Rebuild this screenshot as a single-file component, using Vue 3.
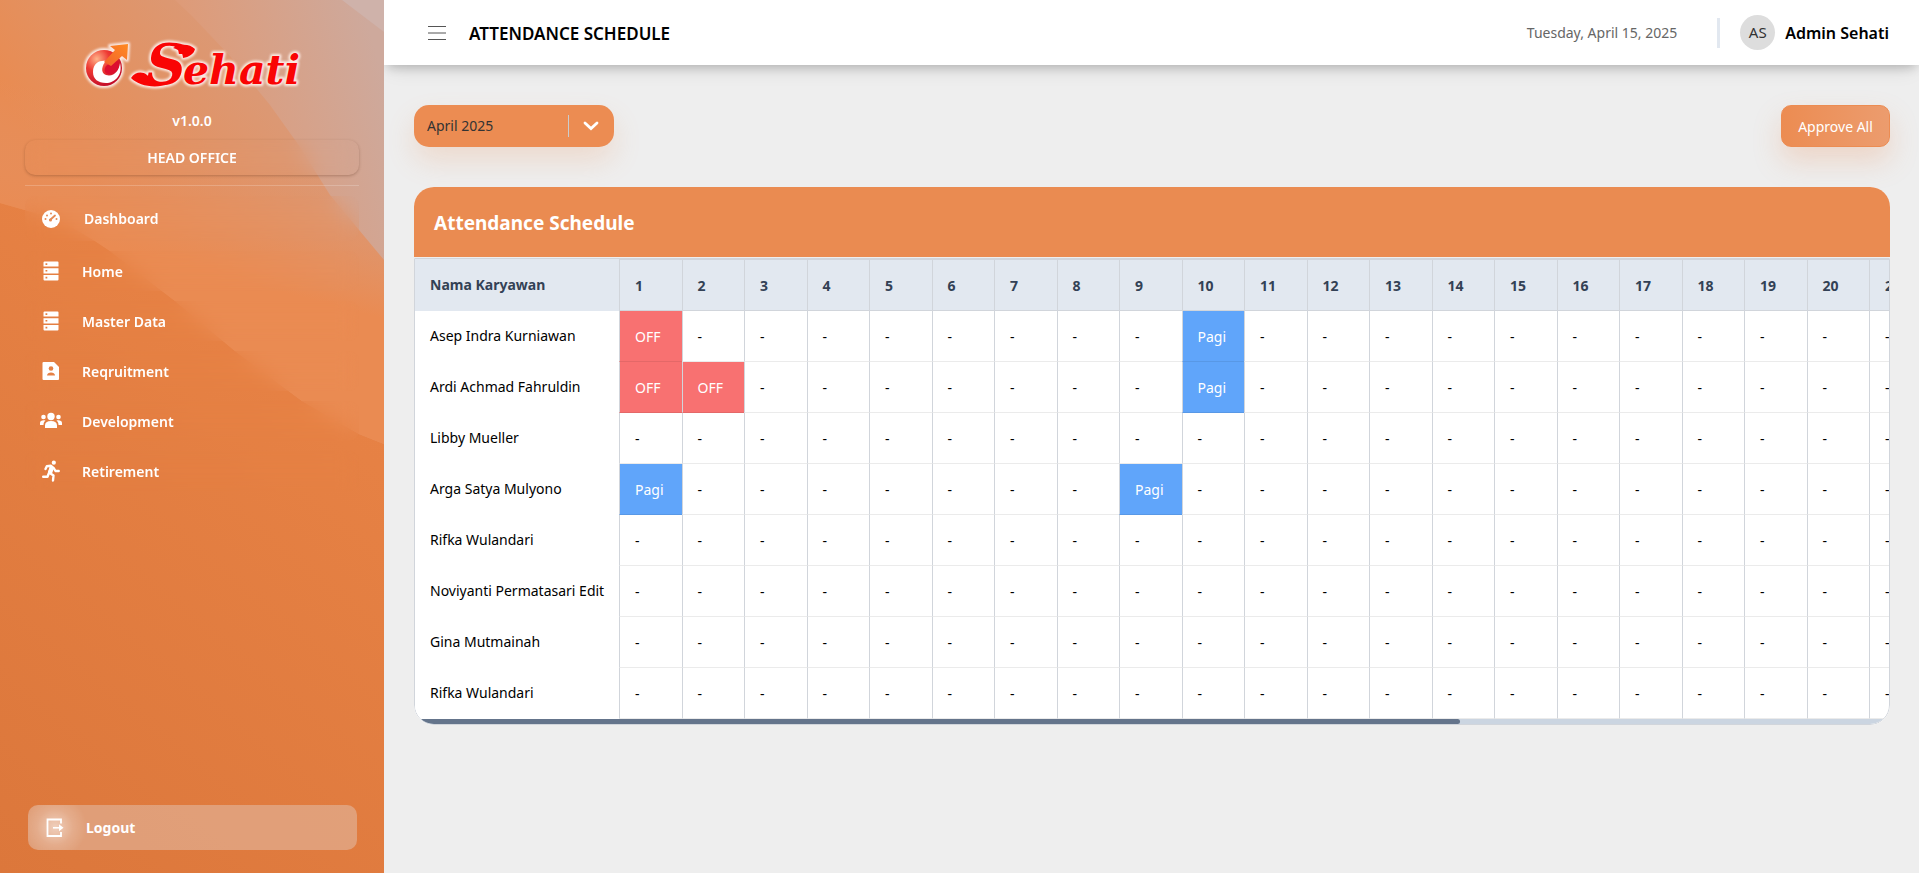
<script setup>
import { ref, computed, onMounted } from 'vue'

const menu = [
  { label: 'Dashboard', icon: 'gauge', active: true },
  { label: 'Home', icon: 'server' },
  { label: 'Master Data', icon: 'server' },
  { label: 'Reqruitment', icon: 'profile' },
  { label: 'Development', icon: 'people' },
  { label: 'Retirement', icon: 'runner' },
]

const month = ref('April 2025')
const months = ['March 2025', 'April 2025', 'May 2025']
const days = Array.from({ length: 30 }, (_, i) => i + 1)

const employees = [
  { name: 'Asep Indra Kurniawan', shifts: { 1: 'OFF', 10: 'Pagi' } },
  { name: 'Ardi Achmad Fahruldin', shifts: { 1: 'OFF', 2: 'OFF', 10: 'Pagi' } },
  { name: 'Libby Mueller', shifts: {} },
  { name: 'Arga Satya Mulyono', shifts: { 1: 'Pagi', 9: 'Pagi' } },
  { name: 'Rifka Wulandari', shifts: {} },
  { name: 'Noviyanti Permatasari Edit', shifts: {} },
  { name: 'Gina Mutmainah', shifts: {} },
  { name: 'Rifka Wulandari', shifts: {} },
]

const shiftClass = (shift) => ({ off: shift === 'OFF', pagi: shift === 'Pagi' })

// The scrollbar under the table follows the scroll position of the table area.
const scroller = ref(null)
const view = ref({ left: 0, shown: 1, total: 1 })
function measure() {
  const el = scroller.value
  view.value = { left: el.scrollLeft, shown: el.clientWidth, total: el.scrollWidth }
}
const thumb = computed(() => ({
  width: (view.value.shown / view.value.total) * 100 + '%',
  marginLeft: (view.value.left / view.value.total) * 100 + '%',
}))
onMounted(() => {
  measure()
  window.addEventListener('resize', measure)
})
</script>

<template>
  <div class="layout">
    <aside class="sidebar">
      <svg class="backdrop" viewBox="0 0 384 873" preserveAspectRatio="none" aria-hidden="true">
        <defs>
          <linearGradient id="base" gradientUnits="userSpaceOnUse" x1="0" y1="873" x2="384" y2="400">
            <stop offset="0" stop-color="#dc773b" />
            <stop offset="1" stop-color="#e78245" />
          </linearGradient>
          <linearGradient id="mid" gradientUnits="userSpaceOnUse" x1="110" y1="240" x2="310" y2="90">
            <stop offset="0" stop-color="#e98b51" />
            <stop offset="1" stop-color="#d99b7b" />
          </linearGradient>
          <linearGradient id="light" gradientUnits="userSpaceOnUse" x1="190" y1="80" x2="370" y2="30">
            <stop offset="0" stop-color="#df9a76" />
            <stop offset="1" stop-color="#cea99c" />
          </linearGradient>
          <linearGradient id="right" gradientUnits="userSpaceOnUse" x1="384" y1="180" x2="350" y2="310">
            <stop offset="0" stop-color="#e1946b" stop-opacity="0" />
            <stop offset="1" stop-color="#ea8b52" />
          </linearGradient>
        </defs>
        <rect width="384" height="873" fill="url(#base)" />
        <path d="M0 0H384V444L359 434L302 401L235 351L175 301L110 251L95 241L60 220L0 203Z" fill="url(#mid)" />
        <path d="M0 0H384V444L359 434L302 401L235 351L175 301L110 251L95 241L60 220L0 203Z" fill="url(#right)" />
        <path d="M175 0H384V260L330 195L300 147L270 105L230 56L192 16Z" fill="url(#light)" />
        <path d="M342 0H384V32Z" fill="#cfb2aa" />
      </svg>

      <svg class="logo" viewBox="0 0 240 70" role="img" aria-label="Sehati">
        <defs>
          <radialGradient id="ball" cx=".3" cy=".25" r=".85">
            <stop offset="0" stop-color="#ffb48a" />
            <stop offset=".4" stop-color="#ee3a33" />
            <stop offset="1" stop-color="#bd0626" />
          </radialGradient>
          <linearGradient id="arrow" x1="0" y1="1" x2="1" y2="0">
            <stop offset="0" stop-color="#f2622c" />
            <stop offset="1" stop-color="#ff8a22" />
          </linearGradient>
          <filter id="soft" x="-10%" y="-10%" width="120%" height="120%">
            <feGaussianBlur stdDeviation="1" />
          </filter>
        </defs>
        <g fill="none" stroke="#fbe9e2" stroke-width="4" stroke-linejoin="round" filter="url(#soft)">
          <circle cx="27" cy="38" r="18" />
          <path d="M33 16L51 14L50 30L45 26L34 36L27 32L38 20Z" />
        </g>
        <circle cx="27" cy="38" r="18" fill="url(#ball)" />
        <path d="M16 42C16 32 24 30 29 31C25 35 23 43 29 45C37 47 42 41 43 33C46 45 38 53 29 53C21 53 16 49 16 42Z" fill="#fff" />
        <path d="M29 36L38 30C44 30 43 40 37 43C31 46 25 43 29 36Z" fill="#dc0f2f" />
        <path d="M33 16L51 14L50 30L45 26L34 36L27 32L38 20Z" fill="url(#arrow)" />
        <g class="wordmark wordmark-glow" filter="url(#soft)">
          <path d="M54 48C58 42 65 41 70 45C76 51 82 54 92 54C78 59 62 56 54 48Z" />
          <path d="M96 18C104 13 113 14 118 19C117 24 112 27 106 28C106 23 103 20 96 18Z" />
          <text x="69" y="54" font-size="56">S</text>
          <text x="106" y="54" font-size="41">ehati</text>
        </g>
        <g class="wordmark">
          <path d="M54 48C58 42 65 41 70 45C76 51 82 54 92 54C78 59 62 56 54 48Z" />
          <path d="M96 18C104 13 113 14 118 19C117 24 112 27 106 28C106 23 103 20 96 18Z" />
          <text x="69" y="54" font-size="56">S</text>
          <text x="106" y="54" font-size="41">ehati</text>
        </g>
      </svg>
      <p class="version">v1.0.0</p>
      <div class="office">HEAD OFFICE</div>
      <hr class="rule" />

      <nav class="menu">
        <a v-for="item in menu" :key="item.label" href="#" class="menu-item" :class="{ active: item.active }">
          <svg v-if="item.icon === 'gauge'" class="icon" viewBox="0 0 22 22">
            <circle cx="11" cy="11" r="9" fill="#fff" />
            <path d="M10 12L15 7.500" stroke="#e58a54" stroke-width="1.800" stroke-linecap="round" />
            <g fill="#e58a54"><circle cx="10.500" cy="12" r="1.500" /><circle cx="5.500" cy="11" r="1" /><circle cx="7" cy="7.500" r="1" /><circle cx="11" cy="5.500" r="1" /><circle cx="16.500" cy="11" r="1" /></g>
          </svg>
          <svg v-else-if="item.icon === 'server'" class="icon" viewBox="0 0 22 22">
            <path fill="#fff" fill-rule="evenodd" d="M4.500 1.500h13a1 1 0 0 1 1 1v4h-15v-4a1 1 0 0 1 1-1zM5.500 3.200v1.800h1.800V3.200zM3.500 8.200h15v5.200h-15zM5.500 10v1.600h1.800V10zM3.500 15h15v4.500a1 1 0 0 1-1 1h-13a1 1 0 0 1-1-1zM5.500 16.800v1.800h1.800v-1.800z" />
          </svg>
          <svg v-else-if="item.icon === 'profile'" class="icon" viewBox="0 0 22 22">
            <path fill="#fff" d="M3.500 2h10.500l5 5v12a1 1 0 0 1-1 1h-14.500a1 1 0 0 1-1-1v-16a1 1 0 0 1 1-1z" />
            <circle cx="11" cy="8.500" r="2.300" fill="#e58146" />
            <path fill="#e58146" d="M7 15.500c0-4 8-4 8 0z" />
          </svg>
          <svg v-else-if="item.icon === 'people'" class="icon" viewBox="0 0 22 22">
            <g fill="#fff">
              <circle cx="11" cy="6.500" r="3.700" /><circle cx="3.500" cy="7" r="2.300" /><circle cx="18.500" cy="7" r="2.300" />
              <path d="M5 18v-2.500c0-3 2-4.500 6-4.500s6 1.500 6 4.500V18zM0 15v-2c0-2 2-3 5.500-2.500C4 12 3.500 13 3.500 15zM22 15v-2c0-2-2-3-5.500-2.500C18 12 18.500 13 18.500 15z" />
            </g>
          </svg>
          <svg v-else class="icon" viewBox="0 0 22 22">
            <circle cx="13.800" cy="2.700" r="2.100" fill="#fff" />
            <path fill="none" stroke="#fff" stroke-linecap="round" stroke-linejoin="round" stroke-width="2.400" d="M5.500 9L6.800 6.300L11 5.800L14 8.500L15.500 11H18.700M11.500 6.500L9 12.500L13.500 15.500L13 20.500M8.500 14L7.500 16.800H3.200" />
            <path fill="#fff" d="M10 5.500L14 8L12 13.500L8 12.500Z" />
          </svg>
          <span>{{ item.label }}</span>
        </a>
      </nav>

      <button class="logout" type="button">
        <svg class="logout-icon" viewBox="0 0 22 22">
          <path fill="none" stroke="#fff" stroke-width="1.800" d="M17 6.500V2.500H3.500V19H17V15" />
          <path fill="none" stroke="#fff" stroke-width="1.600" d="M9 10.800H17" />
          <path fill="#fff" d="M15 7.300L19.500 10.800L15 14.300Z" />
        </svg>
        <span>Logout</span>
      </button>
    </aside>

    <div class="page">
      <header class="topbar">
        <button class="burger" type="button" aria-label="Toggle menu">
          <svg viewBox="0 0 18 16"><path d="M0 1.500H18M0 8H18M0 14.500H18" stroke="#555" stroke-width="1" /></svg>
        </button>
        <h1>ATTENDANCE SCHEDULE</h1>
        <span class="date">Tuesday, April 15, 2025</span>
        <span class="divider"></span>
        <span class="avatar">AS</span>
        <strong class="user">Admin Sehati</strong>
      </header>

      <main class="content">
        <div class="toolbar">
          <div class="month">
            <select v-model="month" aria-label="Month">
              <option v-for="m in months" :key="m">{{ m }}</option>
            </select>
            <span class="month-mark">
              <svg viewBox="0 0 16 10"><path d="M2 2L8 7.500L14 2" fill="none" stroke="#fff" stroke-width="2.800" stroke-linecap="round" /></svg>
            </span>
          </div>
          <button class="approve" type="button">Approve All</button>
        </div>

        <section class="card">
          <h2>Attendance Schedule</h2>
          <div class="frame">
            <div ref="scroller" class="scroller" @scroll="measure">
              <table>
                <colgroup><col class="name-col" /><col v-for="d in days" :key="d" /></colgroup>
                <thead>
                  <tr>
                    <th class="name" scope="col">Nama Karyawan</th>
                    <th v-for="d in days" :key="d" scope="col">{{ d }}</th>
                  </tr>
                </thead>
                <tbody>
                  <tr v-for="(e, i) in employees" :key="i">
                    <td class="name">{{ e.name }}</td>
                    <td v-for="d in days" :key="d" :class="shiftClass(e.shifts[d])">{{ e.shifts[d] || '-' }}</td>
                  </tr>
                </tbody>
              </table>
            </div>
            <div class="track"><div class="thumb" :style="thumb"></div></div>
          </div>
        </section>
      </main>
    </div>
  </div>
</template>

<style>
body {
  background: #eee;
}
</style>

<style scoped>
.layout {
  display: flex;
  min-height: 100vh;
  font-family: "Noto Sans", "Open Sans", sans-serif;
  font-size: 14px;
  color: #000;
}
button,
select {
  font: inherit;
  border: 0;
  cursor: pointer;
}
.sidebar {
  position: relative;
  flex: 0 0 384px;
  box-sizing: border-box;
  display: flex;
  flex-direction: column;
  padding: 30px 25px 23px;
  color: #fff;
}
.backdrop {
  position: absolute;
  inset: 0;
  width: 100%;
  height: 100%;
}
.logo {
  position: relative;
  width: 240px;
  height: 70px;
  margin-left: 52px;
  overflow: visible;
}
.wordmark {
  font-family: "DejaVu Serif", serif;
  font-weight: bold;
  font-style: italic;
  fill: #f90404;
}
.wordmark-glow {
  fill: #fbe9e2;
  stroke: #fbe9e2;
  stroke-width: 4px;
  stroke-linejoin: round;
}
.version {
  position: relative;
  margin: 10px 0 9px;
  text-align: center;
  font-weight: 600;
  line-height: 21px;
}
.office {
  position: relative;
  text-align: center;
  font-weight: 600;
  line-height: 35px;
  border-radius: 10px;
  box-shadow: 0 1px 3px rgba(80, 40, 20, 0.3);
  backdrop-filter: blur(10px);
}
.rule {
  position: relative;
  width: 100%;
  height: 1px;
  margin: 10px 0;
  border: 0;
  background: rgba(255, 255, 255, 0.2);
}
.menu {
  display: flex;
  flex-direction: column;
  gap: 10px;
}
.menu-item {
  position: relative;
  display: flex;
  align-items: center;
  gap: 20px;
  height: 40px;
  padding-left: 15px;
  border-radius: 10px;
  color: #fff;
  font-weight: 600;
  text-decoration: none;
  backdrop-filter: blur(10px);
}
.menu-item.active {
  height: 45px;
  gap: 22px;
}
.icon {
  width: 22px;
  height: 22px;
}
.logout {
  position: relative;
  display: flex;
  align-items: center;
  gap: 20px;
  height: 45px;
  margin: auto 2px 0 3px;
  padding: 0 16px;
  border-radius: 10px;
  background: radial-gradient(circle at 27px 22px, rgba(255, 255, 255, 0.5), rgba(255, 255, 255, 0.15) 18px, rgba(255, 255, 255, 0) 32px), rgba(225, 190, 170, 0.55);
  color: #fff;
  font-weight: 700;
}
.logout-icon {
  width: 22px;
  height: 22px;
}
.page {
  flex: 1;
  min-width: 0;
}
.topbar {
  display: flex;
  align-items: center;
  height: 65px;
  padding: 0 30px 0 44px;
  background: #fff;
  box-shadow: 0 10px 20px -6px rgba(0, 0, 0, 0.1), 0 5px 10px -3px rgba(0, 0, 0, 0.2);
}
.burger {
  display: flex;
  padding: 0;
  background: none;
}
.burger svg {
  width: 18px;
  height: 16px;
}
h1 {
  margin: 2px auto 0 23px;
  font-size: 17px;
  font-weight: 600;
}
.date {
  color: #666;
}
.divider {
  width: 3px;
  height: 30px;
  margin: 0 20px 0 40px;
  background: #e2e8f0;
}
.avatar {
  width: 35px;
  margin-right: 10px;
  border-radius: 50%;
  background: #ddd;
  color: #333;
  font-size: 15px;
  line-height: 35px;
  text-align: center;
}
.user {
  font-size: 16px;
  font-weight: 600;
}
.content {
  padding: 40px 29px 40px 30px;
}
.toolbar {
  display: flex;
  justify-content: space-between;
  margin-bottom: 40px;
}
.month {
  position: relative;
  width: 200px;
  height: 42px;
  border-radius: 15px;
  background: #ec8c52;
  box-shadow: 0 14px 28px rgba(236, 140, 82, 0.2);
}
.month select {
  width: 100%;
  height: 100%;
  padding: 0 60px 2px 13px;
  border-radius: 15px;
  appearance: none;
  background: none;
  color: #333;
}
.month-mark {
  position: absolute;
  top: 10px;
  right: 0;
  display: flex;
  align-items: center;
  width: 45px;
  height: 22px;
  border-left: 1px solid #ccc;
  pointer-events: none;
}
.month-mark svg {
  width: 16px;
  height: 10px;
  margin-left: 14px;
}
.approve {
  width: 109px;
  height: 42px;
  padding: 0;
  border: 1px solid #ec8c52;
  border-radius: 10px;
  background: linear-gradient(90deg, #ec8c52, #ec9c6e);
  box-shadow: 0 14px 28px rgba(236, 140, 82, 0.25);
  color: #fff;
}
.card {
  position: relative;
  border-radius: 20px;
  overflow: hidden;
  background: #fff;
}
h2 {
  margin: 0;
  padding: 2px 20px 0;
  border-bottom: 1px solid #eee;
  background: #ea8b51;
  color: #fff;
  font-size: 19px;
  font-weight: 700;
  line-height: 68px;
}
.frame {
  border: 1px solid #d1d5db;
  border-radius: 0 0 20px 20px;
  overflow: hidden;
}
.scroller {
  overflow-x: auto;
  scrollbar-width: none;
}
.track {
  height: 5px;
  background: #cbd5e1;
}
.thumb {
  height: 5px;
  border-radius: 3px;
  background: #64748b;
}
table {
  width: 2079px;
  table-layout: fixed;
  border-collapse: separate;
  border-spacing: 0;
}
.name-col {
  width: 204px;
}
th,
td {
  box-sizing: border-box;
  height: 51px;
  padding: 0 0 0 15px;
  border-bottom: 1px solid rgba(0, 0, 0, 0.08);
  border-left: 1px solid #d1d5db;
  text-align: left;
}
th {
  height: 52px;
  border-top: 1px solid #d1d5db;
  border-bottom-color: #d1d5db;
  background: #e2e8f0;
  color: #334155;
  font-weight: 700;
}
th.name,
td.name {
  position: sticky;
  left: 0;
  padding: 0 0 2px 14px;
  border-color: transparent;
  white-space: nowrap;
}
td.name {
  background: #fff;
}
td.off,
td.pagi {
  color: #fff;
}
td.off {
  background: #f87171;
}
td.pagi {
  background: #60a5fa;
}
</style>
